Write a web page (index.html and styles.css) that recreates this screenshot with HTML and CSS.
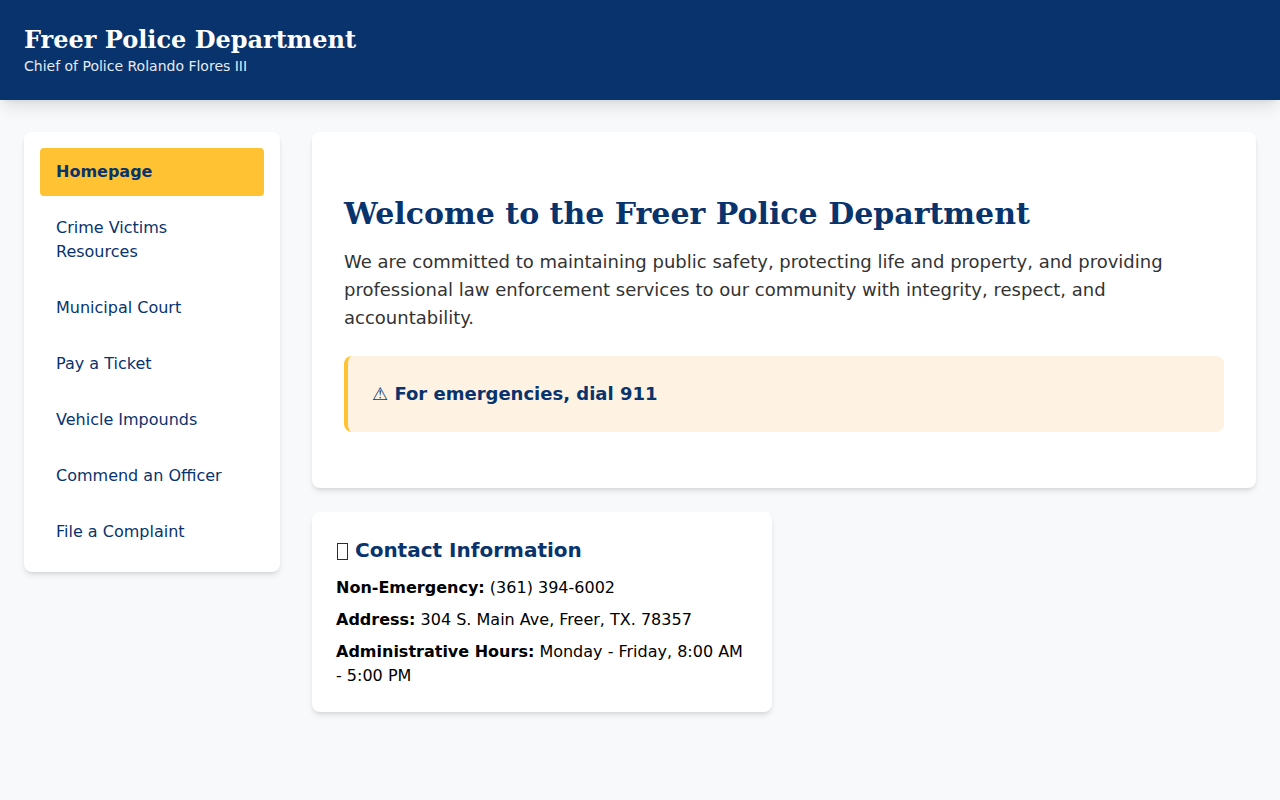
FILE: index.html
```html
<!DOCTYPE html>
<html lang="en">
<head>
<meta charset="utf-8">
<meta name="viewport" content="width=device-width, initial-scale=1">
<title>Freer Police Department</title>
<link rel="stylesheet" href="styles.css">
</head>
<body>
<header class="site-header">
  <h1 class="site-title">Freer Police Department</h1>
  <p class="site-subtitle">Chief of Police Rolando Flores III</p>
</header>
<div class="layout">
  <nav class="sidebar card" aria-label="Main">
    <a class="nav-link active" href="#" aria-current="page">Homepage</a>
    <a class="nav-link" href="#">Crime Victims Resources</a>
    <a class="nav-link" href="#">Municipal Court</a>
    <a class="nav-link" href="#">Pay a Ticket</a>
    <a class="nav-link" href="#">Vehicle Impounds</a>
    <a class="nav-link" href="#">Commend an Officer</a>
    <a class="nav-link" href="#">File a Complaint</a>
  </nav>
  <main class="content">
    <section class="hero card">
      <h2 class="hero-title">Welcome to the Freer Police Department</h2>
      <p class="hero-text">We are committed to maintaining public safety, protecting life and property, and providing professional law enforcement services to our community with integrity, respect, and accountability.</p>
      <div class="alert">
        <p class="alert-text">⚠ For emergencies, dial 911</p>
      </div>
    </section>
    <div class="info-grid">
      <section class="info card">
        <h3 class="info-title"><span class="box-icon" aria-hidden="true"></span> Contact Information</h3>
        <p class="info-row"><strong>Non-Emergency:</strong> (361) 394-6002</p>
        <p class="info-row"><strong>Address:</strong> 304 S. Main Ave, Freer, TX. 78357</p>
        <p class="info-row"><strong>Administrative Hours:</strong> Monday - Friday, 8:00 AM - 5:00 PM</p>
      </section>
    </div>
  </main>
</div>
</body>
</html>
```
FILE: styles.css
```css
*, *::before, *::after { box-sizing: border-box; }
body, h1, h2, h3, p { margin: 0; }
body {
  min-height: 100vh;
  background: #f8f9fb;
  color: #000;
  font: 16px/24px "DejaVu Sans", sans-serif;
}
.card {
  background: #fff;
  border-radius: 8px;
  box-shadow: 0 4px 6px -1px rgba(0, 0, 0, 0.1), 0 2px 4px -2px rgba(0, 0, 0, 0.1);
}
.site-header {
  padding: 24px;
  background: #08336c;
  color: #fff;
  box-shadow: 0 10px 15px -3px rgba(0, 0, 0, 0.1), 0 4px 6px -4px rgba(0, 0, 0, 0.1);
}
.site-title {
  font: 700 24px/32px "DejaVu Serif", serif;
}
.site-subtitle {
  font-size: 14px;
  line-height: 20px;
  opacity: 0.9;
}
.layout {
  display: grid;
  grid-template-columns: 256px minmax(0, 1fr);
  align-items: start;
  gap: 32px;
  padding: 32px 24px;
}
.sidebar {
  display: flex;
  flex-direction: column;
  gap: 8px;
  padding: 16px;
}
.nav-link {
  padding: 12px 16px;
  border-radius: 4px;
  color: #08336c;
  text-decoration: none;
}
.nav-link.active {
  background: #ffc233;
  font-weight: 700;
}
.content {
  display: grid;
  gap: 24px;
}
.hero { padding: 64px 32px 56px; }
.hero-title {
  margin-bottom: 16px;
  color: #08336c;
  font: 700 30px/36px "DejaVu Serif", serif;
}
.hero-text {
  margin-bottom: 24px;
  color: #333;
  font-size: 18px;
  line-height: 28px;
}
.alert {
  padding: 24px;
  border-left: 4px solid #ffc233;
  border-radius: 8px;
  background: #fef2e2;
}
.alert-text {
  color: #08336c;
  font-size: 18px;
  font-weight: 700;
  line-height: 28px;
}
.info-grid {
  display: grid;
  grid-template-columns: repeat(2, minmax(0, 1fr));
  gap: 24px;
}
.info { padding: 24px; }
.info-title {
  margin-bottom: 12px;
  color: #08336c;
  font-size: 20px;
  font-weight: 700;
  line-height: 28px;
}
.box-icon {
  display: inline-block;
  width: 11px;
  height: 17px;
  margin-left: 1px;
  border: 1px solid currentColor;
  vertical-align: -3px;
}
.info-row + .info-row { margin-top: 8px; }
```
